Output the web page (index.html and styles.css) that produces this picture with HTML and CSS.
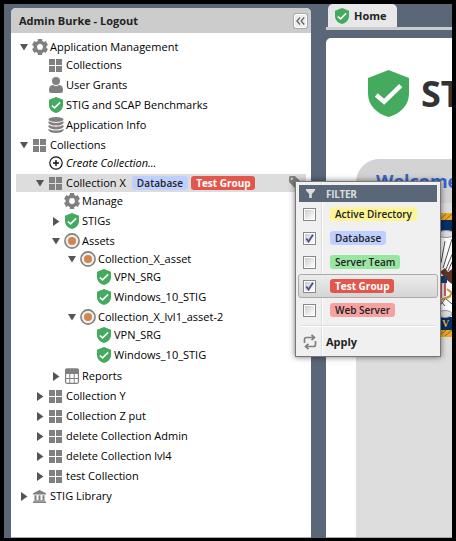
FILE: index.html
```html
<!DOCTYPE html>
<html lang="en">
<head>
<meta charset="utf-8">
<title>STIG Manager</title>
<link rel="stylesheet" href="styles.css">
</head>
<body>
<svg class="defs" width="0" height="0" aria-hidden="true">
  <symbol id="shield" viewBox="0 0 42 48"><path fill="#44ab5e" d="M21 0 42 8v16c0 12-9 21-21 24C9 45 0 36 0 24V8z"/><path fill="none" stroke="#fff" stroke-width="4.6" d="M8.5 25.500 16.500 32.500 33.500 16"/></symbol>
  <symbol id="grid" viewBox="0 0 13 13"><path fill="#808080" d="M0 0h6v6H0zM7 0h6v6H7zM0 7h6v6H0zM7 7h6v6H7z"/></symbol>
  <symbol id="gear" viewBox="0 0 16 16"><circle cx="8" cy="8" r="4.700" fill="none" stroke="#808080" stroke-width="3.600"/><path stroke="#808080" stroke-width="4.400" d="M8 0v3M8 13v3M1.100 4l2.600 1.500M12.300 10.500l2.600 1.500M1.100 12l2.600-1.500M12.300 5.500l2.600-1.500"/></symbol>
  <symbol id="user" viewBox="0 0 14 16"><circle cx="7" cy="4" r="4" fill="#808080"/><path fill="#808080" d="M4 8q3 2 6 0c3 .5 4 2 4 5v1q0 2-2 2H2q-2 0-2-2v-1c0-3 1-4.500 4-5z"/></symbol>
  <symbol id="db" viewBox="0 0 16 16"><ellipse cx="8" cy="2.500" rx="7.500" ry="2.500" fill="#808080"/><path fill="#808080" d="M.5 4.300q7.500 3.400 15 0v2q-2 2.300-7.500 2.300T.5 6.300zM.5 8.100q7.500 3.400 15 0v2q-2 2.300-7.500 2.300T.5 10.100zM.5 11.900q7.500 3.400 15 0v1.600Q13.500 16 8 16T.5 13.500z"/></symbol>
  <symbol id="plus" viewBox="0 0 14 14"><circle cx="7" cy="7" r="6.200" fill="#fff" stroke="#111" stroke-width="1.200"/><path stroke="#111" stroke-width="1.400" d="M7 4v6M4 7h6"/></symbol>
  <symbol id="target" viewBox="0 0 16 16"><circle cx="8" cy="8" r="7.100" fill="#eee" stroke="#808080" stroke-width="1.600"/><circle cx="8" cy="8" r="4" fill="#d0874f"/></symbol>
  <symbol id="table" viewBox="0 0 14 16"><rect x=".6" y="1" width="12.800" height="14.400" rx="1.500" fill="#fff" stroke="#808080" stroke-width="1.200"/><path fill="#808080" d="M0 2Q0 .5 1.500.5h11Q14 .5 14 2v4H0z"/><path stroke="#808080" d="M0 10.500h14M4.800 6v9.500M9.200 6v9.500"/></symbol>
  <symbol id="bank" viewBox="0 0 13 13"><path fill="#808080" d="M6.500 0 13 3.200v1.300H0V3.200zM1.500 5.200h2V10h-2zM5.500 5.200h2V10h-2zM9.500 5.200h2V10h-2zM1 10.300h11v1H1zM0 11.600h13V13H0z"/></symbol>
  <symbol id="open" viewBox="0 0 8 7"><path fill="#555" d="M0 0h8L4 6.500z"/></symbol>
  <symbol id="shut" viewBox="0 0 7 9"><path fill="#555" d="M.5 0 7 4.500.5 9z"/></symbol>
</svg>
<div class="app">
  <aside class="sidebar">
    <header class="side-head"><span>Admin Burke - Logout</span>
      <button class="collapse" aria-label="Collapse"><svg width="9" height="8" viewBox="0 0 9 8"><path fill="none" stroke="#666" stroke-width="1.300" d="M4 .5.900 4 4 7.500M8.200.5 5.100 4l3.100 3.500"/></svg></button>
    </header>
    <ul class="tree">
      <li><div class="row"><svg class="arrow"><use href="#open"/></svg><svg class="icon"><use href="#gear"/></svg><span>Application Management</span></div>
        <ul>
          <li><div class="row leaf"><svg class="icon i13"><use href="#grid"/></svg><span>Collections</span></div></li>
          <li><div class="row leaf"><svg class="icon"><use href="#user"/></svg><span>User Grants</span></div></li>
          <li><div class="row leaf"><svg class="icon"><use href="#shield"/></svg><span>STIG and SCAP Benchmarks</span></div></li>
          <li><div class="row leaf"><svg class="icon"><use href="#db"/></svg><span>Application Info</span></div></li>
        </ul></li>
      <li><div class="row"><svg class="arrow"><use href="#open"/></svg><svg class="icon i13"><use href="#grid"/></svg><span>Collections</span></div>
        <ul>
          <li><div class="row leaf"><svg class="icon i14"><use href="#plus"/></svg><span class="create">Create Collection...</span></div></li>
          <li><div class="row selected"><svg class="arrow"><use href="#open"/></svg><svg class="icon i13"><use href="#grid"/></svg><span>Collection X</span><b class="tag blue">Database</b><b class="tag red">Test Group</b><svg class="label" viewBox="0 0 14 14"><path fill="#808080" d="M0 1.500Q0 0 1.500 0H6l8 8-6 6-8-8z"/><circle cx="2.800" cy="2.800" r="1.100" fill="#ddd"/></svg></div>
            <ul>
              <li><div class="row leaf"><svg class="icon"><use href="#gear"/></svg><span>Manage</span></div></li>
              <li><div class="row"><svg class="arrow"><use href="#shut"/></svg><svg class="icon"><use href="#shield"/></svg><span>STIGs</span></div></li>
              <li><div class="row"><svg class="arrow"><use href="#open"/></svg><svg class="icon"><use href="#target"/></svg><span>Assets</span></div>
                <ul>
                  <li><div class="row"><svg class="arrow"><use href="#open"/></svg><svg class="icon"><use href="#target"/></svg><span>Collection_X_asset</span></div>
                    <ul>
                      <li><div class="row leaf"><svg class="icon"><use href="#shield"/></svg><span>VPN_SRG</span></div></li>
                      <li><div class="row leaf"><svg class="icon"><use href="#shield"/></svg><span>Windows_10_STIG</span></div></li>
                    </ul></li>
                  <li><div class="row"><svg class="arrow"><use href="#open"/></svg><svg class="icon"><use href="#target"/></svg><span>Collection_X_lvl1_asset-2</span></div>
                    <ul>
                      <li><div class="row leaf"><svg class="icon"><use href="#shield"/></svg><span>VPN_SRG</span></div></li>
                      <li><div class="row leaf"><svg class="icon"><use href="#shield"/></svg><span>Windows_10_STIG</span></div></li>
                    </ul></li>
                </ul></li>
              <li class="reports"><div class="row"><svg class="arrow"><use href="#shut"/></svg><svg class="icon"><use href="#table"/></svg><span>Reports</span></div></li>
            </ul></li>
          <li><div class="row"><svg class="arrow"><use href="#shut"/></svg><svg class="icon i13"><use href="#grid"/></svg><span>Collection Y</span></div></li>
          <li><div class="row"><svg class="arrow"><use href="#shut"/></svg><svg class="icon i13"><use href="#grid"/></svg><span>Collection Z put</span></div></li>
          <li><div class="row"><svg class="arrow"><use href="#shut"/></svg><svg class="icon i13"><use href="#grid"/></svg><span>delete Collection Admin</span></div></li>
          <li><div class="row"><svg class="arrow"><use href="#shut"/></svg><svg class="icon i13"><use href="#grid"/></svg><span>delete Collection lvl4</span></div></li>
          <li><div class="row"><svg class="arrow"><use href="#shut"/></svg><svg class="icon i13"><use href="#grid"/></svg><span>test Collection</span></div></li>
        </ul></li>
      <li><div class="row"><svg class="arrow"><use href="#shut"/></svg><svg class="icon i13"><use href="#bank"/></svg><span>STIG Library</span></div></li>
    </ul>
  </aside>
  <main class="main">
    <nav class="tabs"><div class="tab"><svg width="14" height="16"><use href="#shield"/></svg><span>Home</span></div></nav>
    <section class="panel">
      <div class="brand"><svg width="41" height="47"><use href="#shield"/></svg><h1>ST</h1></div>
      <div class="card">
        <h2>Welcome</h2>
        <svg class="seal" width="126" height="126" viewBox="0 0 126 126">
          <path fill="#e9a927" d="M5 2h60v9H5zM5 117h60v9H5z"/>
          <path stroke="#9c6714" d="M5 9l7-6M11 9l7-6M17 9l7-6M5 125l7-6M11 125l7-6M17 125l7-6"/>
          <path fill="#062f68" d="M5 9h60v11H5zM5 106h60v13H5z"/>
          <path fill="#fff" d="M5 20h60v86H5z"/>
          <path stroke="#222" stroke-width=".8" d="M24 28 15 57M26 39 18 58M25 49 20 60M17 30l-4 22"/>
          <ellipse cx="18" cy="23" rx="8" ry="3.500" fill="#ddd" stroke="#999"/>
          <ellipse cx="17" cy="103" rx="7" ry="3.500" fill="#ddd" stroke="#999"/>
          <path fill="#633322" d="M12 61l5-4 3 4 4-3v15l-4-3z"/>
          <path fill="#153e77" d="M5 65h14v7H5z"/>
          <path fill="#f1dddd" d="M5 72h13v15H5z"/><path stroke="#c65a66" stroke-width="2" d="M13 72v15M17 72v13"/>
          <path fill="none" stroke="#c29332" stroke-width="2" d="M19 78l5 4-4 5M10 90l13-5"/>
          <path stroke="#555" d="M10 87l7 8M11 96l6-8M18 88l6 5"/>
          <text x="14" y="116" class="seal-letter">V</text>
        </svg>
      </div>
    </section>
  </main>
</div>
<div class="menu">
  <div class="menu-head"><svg width="9" height="9" viewBox="0 0 9 9"><path fill="#ddd" d="M0 0h9v1.500L5.800 5v4H3.200V5L0 1.500z"/></svg><span>FILTER</span></div>
  <div class="opt"><i class="box"></i><b class="tag yellow">Active Directory</b></div>
  <div class="opt"><i class="box"><svg viewBox="0 0 9 9"><path d="M1.300 4.500 3.500 7.500 8 .8"/></svg></i><b class="tag blue">Database</b></div>
  <div class="opt"><i class="box"></i><b class="tag green">Server Team</b></div>
  <div class="opt active"><i class="box"><svg viewBox="0 0 9 9"><path d="M1.300 4.500 3.500 7.500 8 .8"/></svg></i><b class="tag red">Test Group</b></div>
  <div class="opt"><i class="box"></i><b class="tag pink">Web Server</b></div>
  <hr>
  <div class="apply"><svg width="14" height="16" viewBox="0 0 14 16"><path fill="none" stroke="#808080" stroke-width="1.700" d="M1.500 9V5.500q0-2 2-2H11M8.500.8l3 2.700-3 2.700M12.500 7v3.500q0 2-2 2H3M5.500 9.800l-3 2.700 3 2.700"/></svg><span>Apply</span></div>
</div>
</body>
</html>
```
FILE: styles.css
```css
* { box-sizing: border-box; }
body { margin: 0; width: 456px; height: 541px; padding: 4px 4px 3px; background: #000; overflow: hidden; font: 11px/18px "Open Sans", "Noto Sans", sans-serif; color: #000; }
.defs { position: absolute; }
.app { height: 534px; display: flex; gap: 15px; padding-left: 7px; background: #5a6778; overflow: hidden; }
.sidebar { width: 300px; flex: none; margin-top: 4px; background: #fff; border-radius: 5px 5px 0 0; border-bottom: 1px solid #aaa; overflow: hidden; }
.side-head { height: 25px; display: flex; align-items: center; justify-content: space-between; padding: 0 4px 0 8px; background: #ccc; color: #222; font-weight: 700; }
.collapse { width: 13px; height: 14px; display: flex; align-items: center; justify-content: center; padding: 0; border: 1px solid #fff; border-radius: 2px; background: #eee; box-shadow: 0 0 0 1px #aaa; }
ul { list-style: none; margin: 0; padding: 0; }
.tree { padding: 5px 5px 0; }
.row { height: 18px; display: flex; align-items: center; margin-bottom: 2px; white-space: nowrap; }
.row:has(+ ul) { margin-bottom: 0; }
.tree ul .row { padding-left: 16px; }
.tree ul .leaf { padding-left: 32px; }
.tree ul ul .row { padding-left: 32px; }
.tree ul ul .leaf { padding-left: 48px; }
.tree ul ul ul .row { padding-left: 48px; }
.tree ul ul ul ul .leaf { padding-left: 80px; }
.reports { padding-top: 1px; }
.arrow { width: 8px; height: 9px; margin: 0 4px; flex: none; }
.icon { width: 16px; height: 16px; margin-right: 2px; flex: none; }
.i13 { width: 13px; height: 13px; margin: 0 4px 0 1px; }
.i14 { width: 14px; height: 14px; margin: 0 3px 0 1px; }
.create { font-style: italic; }
.selected { background: #ddd; }
.label { width: 14px; height: 14px; margin-left: auto; margin-right: 3px; }
.tag { height: 14px; padding: 0 5px; border-radius: 3px; color: #222; font-size: 10px; line-height: 14px; font-weight: 600; white-space: nowrap; }
.row .tag { margin-left: 6px; }
.row .tag + .tag { margin-left: 3px; }
.blue { background: #bfcfff; letter-spacing: .1px; }
.red { background: #e2574c; color: #fff; font-weight: 700; }
.row .red { padding: 0 4px 0 5px; }
.yellow { background: #fff497; }
.green { background: #99e6a2; }
.pink { background: #f7a2a2; }
.main { width: 126px; flex: none; display: flex; flex-direction: column; overflow: hidden; }
.tabs { height: 26px; flex: none; padding-left: 2px; border-bottom: 3px solid #ccc; }
.tab { width: 69px; height: 23px; display: flex; align-items: center; gap: 5px; padding-left: 7px; background: #e8e8e8; border-radius: 5px 5px 0 0; color: #222; font-size: 11px; font-weight: 700; }
.panel { flex: 1; margin-top: 8px; padding: 32px 0 0 30px; background: #fff; border-radius: 5px 0 0; border-bottom: 1px solid #aaa; overflow: hidden; }
.brand { display: flex; align-items: center; gap: 12px; height: 47px; padding-left: 12px; }
.brand svg { flex: none; }
h1 { margin: 0; font-size: 36px; line-height: 47px; color: #333; white-space: nowrap; }
.card { width: 400px; height: 400px; margin-top: 42px; border-radius: 24px 0 0; background: #ddd; overflow: hidden; }
h2 { margin: 0; height: 44px; padding-left: 20px; background: #d3d3d3; color: #36c; font-size: 18px; line-height: 44px; }
.seal { display: block; margin: 8px 0 0 72px; }
.seal-letter { font: 700 10px "Liberation Serif", serif; fill: #e9b445; }
.menu { position: absolute; left: 295px; top: 181px; width: 146px; height: 176px; padding: 3px; border: 1px solid #777; background: linear-gradient(90deg, transparent 25px, #ddd 25px, #ddd 26px, #fff 26px, #fff 27px, transparent 27px), #f0f0f0; box-shadow: 0 0 6px rgba(0,0,0,.55); }
.menu-head { height: 17px; display: flex; align-items: center; padding-left: 7px; gap: 11px; background: #5a6778; color: #ddd; font-size: 10px; font-weight: 700; letter-spacing: -.3px; }
.opt { height: 24px; display: flex; align-items: center; padding-left: 3px; border: 1px solid transparent; }
.opt.active { margin: 0 -1px; padding-left: 4px; border-color: #aaa; border-radius: 3px; background: linear-gradient(#ececec, #d5d5d5); }
.box { width: 13px; height: 13px; margin-right: 14px; display: flex; padding: 1px; border: 1px solid #888; background: linear-gradient(135deg, #ccc, #fff) content-box, #fff; }
.box svg { width: 9px; height: 9px; fill: none; stroke: #405491; stroke-width: 1.900; }
.opt .tag { flex: none; }
hr { height: 2px; margin: 3px 2px 0; border: 0; background: #fff; border-top: 1px solid #ddd; }
.apply { height: 28px; display: flex; align-items: center; padding: 2px 0 0 4px; gap: 9px; color: #222; font-weight: 700; }
```
